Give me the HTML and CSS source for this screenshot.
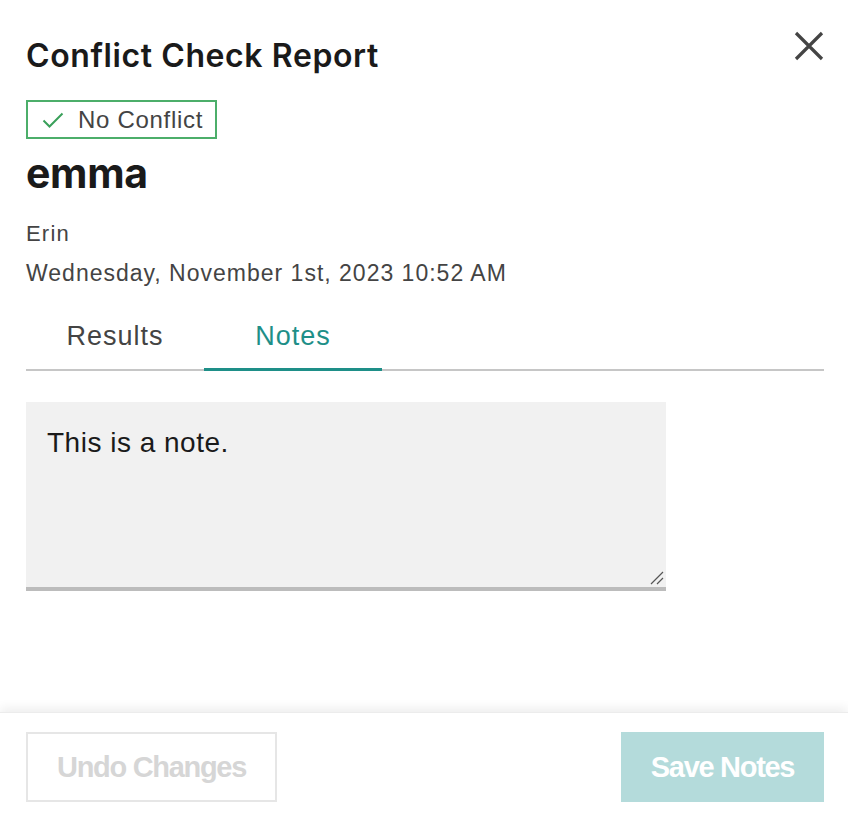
FILE: index.html
```html
<!DOCTYPE html>
<html>
<head>
<meta charset="utf-8">
<link rel="stylesheet" href="styles.css">
</head>
<body>
<div class="panel">
  <div class="content">
    <div class="header">
      <h1 class="title">Conflict Check Report</h1>
      <button class="close" aria-label="Close">
        <svg width="30" height="30" viewBox="0 0 30 30"><path d="M2 2 L28 28 M28 2 L2 28" stroke="#444" stroke-width="3.2" fill="none"/></svg>
      </button>
    </div>
    <div class="badge">
      <svg width="22" height="18" viewBox="0 0 22 18"><path d="M1.5 9.5 L7.5 15.5 L20.5 2.5" stroke="#3aa05a" stroke-width="2" fill="none"/></svg>
      <span>No Conflict</span>
    </div>
    <div class="name">emma</div>
    <div class="meta">Erin</div>
    <div class="meta date">Wednesday, November 1st, 2023 10:52 AM</div>
    <div class="tabs">
      <div class="tab">Results</div>
      <div class="tab active">Notes</div>
    </div>
    <div class="note-wrap">
      <div class="note">This is a note.</div>
      <svg class="grip" width="14" height="14" viewBox="0 0 14 14"><path d="M1 13 L13 1 M7 13 L13 7" stroke="#555" stroke-width="1.2" fill="none"/></svg>
    </div>
  </div>
  <div class="footer">
    <button class="btn undo">Undo Changes</button>
    <button class="btn save">Save Notes</button>
  </div>
</div>
</body>
</html>
```
FILE: styles.css
```css
* { box-sizing: border-box; }
html, body { margin: 0; padding: 0; background: #fff; }
body { font-family: "Inter", "Liberation Sans", sans-serif; color: #1a1a1a; }
.panel { width: 848px; height: 814px; display: flex; flex-direction: column; }
.content { flex: 1; padding: 30px 24px 0 26px; }
.header { display: flex; justify-content: space-between; align-items: flex-start; }
.title { margin: 8px 0 0 0; font-size: 32px; font-weight: 600; letter-spacing: 0.6px; line-height: 36px; color: #1a1a1a; }
.close { background: none; border: 0; padding: 0; margin: 1px 0 0 0; width: 30px; height: 30px; cursor: pointer; }
.close svg { display: block; }
.badge { margin-top: 26px; display: inline-flex; align-items: center; height: 39px; width: 191px; border: 2px solid #4cae6a; padding: 0 0 0 14px; gap: 14px; }
.badge span { font-size: 24px; color: #444; letter-spacing: 0.7px; font-family: "Liberation Sans", sans-serif; }
.name { margin-top: 12px; font-size: 41px; font-weight: 700; line-height: 44px; letter-spacing: -0.3px; color: #1a1a1a; }
.meta { font-family: "Liberation Sans", sans-serif; font-size: 22px; color: #444; line-height: 26px; margin-top: 26px; letter-spacing: 1.2px; }
.meta.date { margin-top: 13px; font-size: 23px; letter-spacing: 1px; }
.tabs { margin-top: 30px; display: flex; border-bottom: 2px solid #c6c6c6; }
.tab { width: 178px; text-align: center; font-family: "Liberation Sans", sans-serif; font-size: 27px; letter-spacing: 1px; color: #444; padding: 5px 0 16px 0; margin-bottom: -2px; border-bottom: 3px solid transparent; }
.tab.active { color: #1e8f88; border-bottom-color: #1e8f88; }
.note-wrap { position: relative; margin-top: 31px; width: 640px; height: 189px; background: #f1f1f1; border-bottom: 4px solid #bcbcbc; }
.note { padding: 25px 21px; font-family: "Liberation Sans", sans-serif; font-size: 28px; color: #1a1a1a; letter-spacing: 0.5px; }
.grip { position: absolute; right: 2px; bottom: 2px; }
.footer { height: 102px; box-shadow: 0 -4px 10px rgba(0,0,0,0.07); border-top: 1px solid #ececec; display: flex; justify-content: space-between; align-items: flex-start; padding: 19px 24px 0 26px; }
.btn { height: 70px; font-family: "Liberation Sans", sans-serif; font-weight: 700; font-size: 29px; letter-spacing: -1.3px; cursor: default; }
.undo { width: 251px; background: #fff; border: 2px solid #e6e6e6; color: #d6d6d6; }
.save { width: 203px; background: #b4dbdb; border: 0; color: #fff; }
```
